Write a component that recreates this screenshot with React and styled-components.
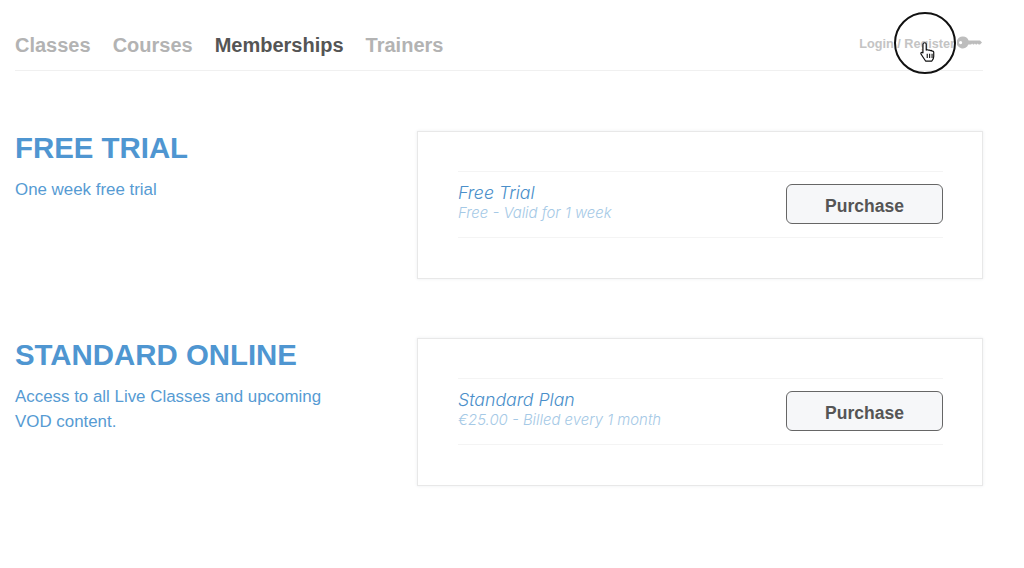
import React from 'react';
import styled, { createGlobalStyle } from 'styled-components';

const plans = [
    {
        heading: 'FREE TRIAL',
        text: 'One week free trial',
        name: 'Free Trial',
        detail: 'Free - Valid for 1 week',
    },
    {
        heading: 'STANDARD ONLINE',
        text: 'Access to all Live Classes and upcoming VOD content.',
        name: 'Standard Plan',
        detail: '€25.00 - Billed every 1 month',
    },
];

const navItems = ['Classes', 'Courses', 'Memberships', 'Trainers'];

const KeyIcon = () => (
    <KeySvg viewBox="0 0 25 13">
        <path
            fillRule="evenodd"
            d="M6 .5a6 6 0 0 1 5.600 3.900h11.400l2 2.100-2 2.100h-1.400l-.9-1-.9 1h-1l-.9-1-.9 1h-1l-.9-1-.9 1h-2.900A6 6 0 1 1 6 .5zM3.600 5a1.600 1.600 0 1 0 0 3.200 1.600 1.600 0 0 0 0-3.200z"
            fill="#bdbdbd"
        />
    </KeySvg>
);

const HandCursor = () => (
    <CursorSvg viewBox="0 0 16 20">
        <path
            d="M5 1.600c.8 0 1.400.6 1.400 1.400v5.200l1-.2c.5-.1 1 .1 1.300.4.500-.2 1.100-.1 1.500.3.500-.2 1.200 0 1.500.5.700-.2 1.500.3 1.500 1.100v3.700c0 1.900-1 3.100-1.700 4.200H5.800L2.200 12.700c-.5-.7-1-1.300-.6-2 .4-.6 1.300-.6 1.800 0V3C3.500 2.200 4.200 1.600 5 1.600z"
            fill="#fff"
            stroke="#111"
            strokeWidth="1.100"
            strokeLinejoin="round"
        />
        <path d="M7.300 11.500v4M9.500 11.500v4M11.700 11.500v4" stroke="#111" strokeWidth="1" fill="none" />
    </CursorSvg>
);

const App = () => (
    <Page>
        <GlobalStyle />
        <Header>
            <Nav>
                {navItems.map((item) => (
                    <NavLink key={item} $active={item === 'Memberships'}>{item}</NavLink>
                ))}
            </Nav>
            <Account>
                <span>Login / Register</span>
                <KeyIcon />
                <Spotlight />
                <HandCursor />
            </Account>
        </Header>
        <Sections>
            {plans.map((plan) => (
                <Section key={plan.heading}>
                    <Intro>
                        <Heading>{plan.heading}</Heading>
                        <IntroText>{plan.text}</IntroText>
                    </Intro>
                    <Card>
                        <PlanRow>
                            <div>
                                <PlanName>{plan.name}</PlanName>
                                <PlanDetail>{plan.detail}</PlanDetail>
                            </div>
                            <PurchaseButton>Purchase</PurchaseButton>
                        </PlanRow>
                    </Card>
                </Section>
            ))}
        </Sections>
    </Page>
);

const GlobalStyle = createGlobalStyle`
    body {
        margin: 0;
        background: #fff;
        font-family: "Liberation Sans", Arial, sans-serif;
    }
`;

const Page = styled.div`
    width: 1024px;
    height: 568px;
    overflow: hidden;
    padding: 0 41px 0 15px;
    box-sizing: border-box;
`;

const Header = styled.header`
    height: 71px;
    display: flex;
    justify-content: space-between;
    border-bottom: 1px solid #f0f0f0;
    box-sizing: border-box;
`;

const Nav = styled.nav`
    display: flex;
    gap: 22px;
    padding-top: 34px;
`;

const NavLink = styled.a`
    font-size: 20px;
    line-height: 23px;
    font-weight: 700;
    color: ${(props) => (props.$active ? '#555' : '#b3b3b3')};
`;

const Account = styled.div`
    position: relative;
    display: flex;
    align-items: flex-start;
    padding-top: 37px;
    margin-right: 1px;
    font-size: 12.7px;
    line-height: 14px;
    font-weight: 700;
    color: #c4c4c4;
`;

const KeySvg = styled.svg`
    width: 25px;
    height: 13px;
    margin: -1px 0 0 2px;
`;

const Spotlight = styled.div`
    position: absolute;
    left: 35px;
    top: 12px;
    width: 62px;
    height: 62px;
    border: 2px solid #111;
    border-radius: 50%;
    box-sizing: border-box;
`;

const CursorSvg = styled.svg`
    position: absolute;
    left: 60px;
    top: 41px;
    width: 18px;
    height: 22px;
`;

const Sections = styled.main`
    display: flex;
    flex-direction: column;
    gap: 59px;
    padding-top: 60px;
`;

const Section = styled.section`
    display: flex;
`;

const Intro = styled.div`
    width: 402px;
    flex-shrink: 0;
`;

const Heading = styled.h2`
    margin: 0;
    font-size: 29.4px;
    line-height: 34px;
    font-weight: 700;
    color: #4f96d1;
`;

const IntroText = styled.p`
    margin: 12px 0 0;
    width: 320px;
    font-size: 16.9px;
    line-height: 25px;
    color: #569bd3;
`;

const Card = styled.div`
    flex: 1;
    height: 148px;
    padding: 39px 39px 0 40px;
    background: #fff;
    border: 1px solid #e8e8e8;
    box-shadow: 0 0 3px rgba(60, 80, 110, 0.1);
    box-sizing: border-box;
`;

const PlanRow = styled.div`
    height: 67px;
    padding-bottom: 1px;
    display: flex;
    align-items: center;
    justify-content: space-between;
    border-top: 1px solid #f4f4f4;
    border-bottom: 1px solid #f4f4f4;
    box-sizing: border-box;
`;

const PlanName = styled.div`
    font-family: Inter, sans-serif;
    font-size: 17.7px;
    line-height: 21px;
    font-weight: 300;
    font-style: italic;
    color: #4a8fca;
    margin-top: -3px;
`;

const PlanDetail = styled.div`
    font-family: Inter, sans-serif;
    font-size: 14.9px;
    line-height: 20px;
    font-weight: 300;
    font-style: italic;
    color: #a5c9e6;
`;

const PurchaseButton = styled.button`
    width: 157px;
    height: 40px;
    padding: 4px 0 0;
    background: #f6f7f9;
    border: 1px solid #666;
    border-radius: 6px;
    font-family: "Liberation Sans", Arial, sans-serif;
    font-size: 17.5px;
    font-weight: 700;
    color: #555;
`;

export default App;
